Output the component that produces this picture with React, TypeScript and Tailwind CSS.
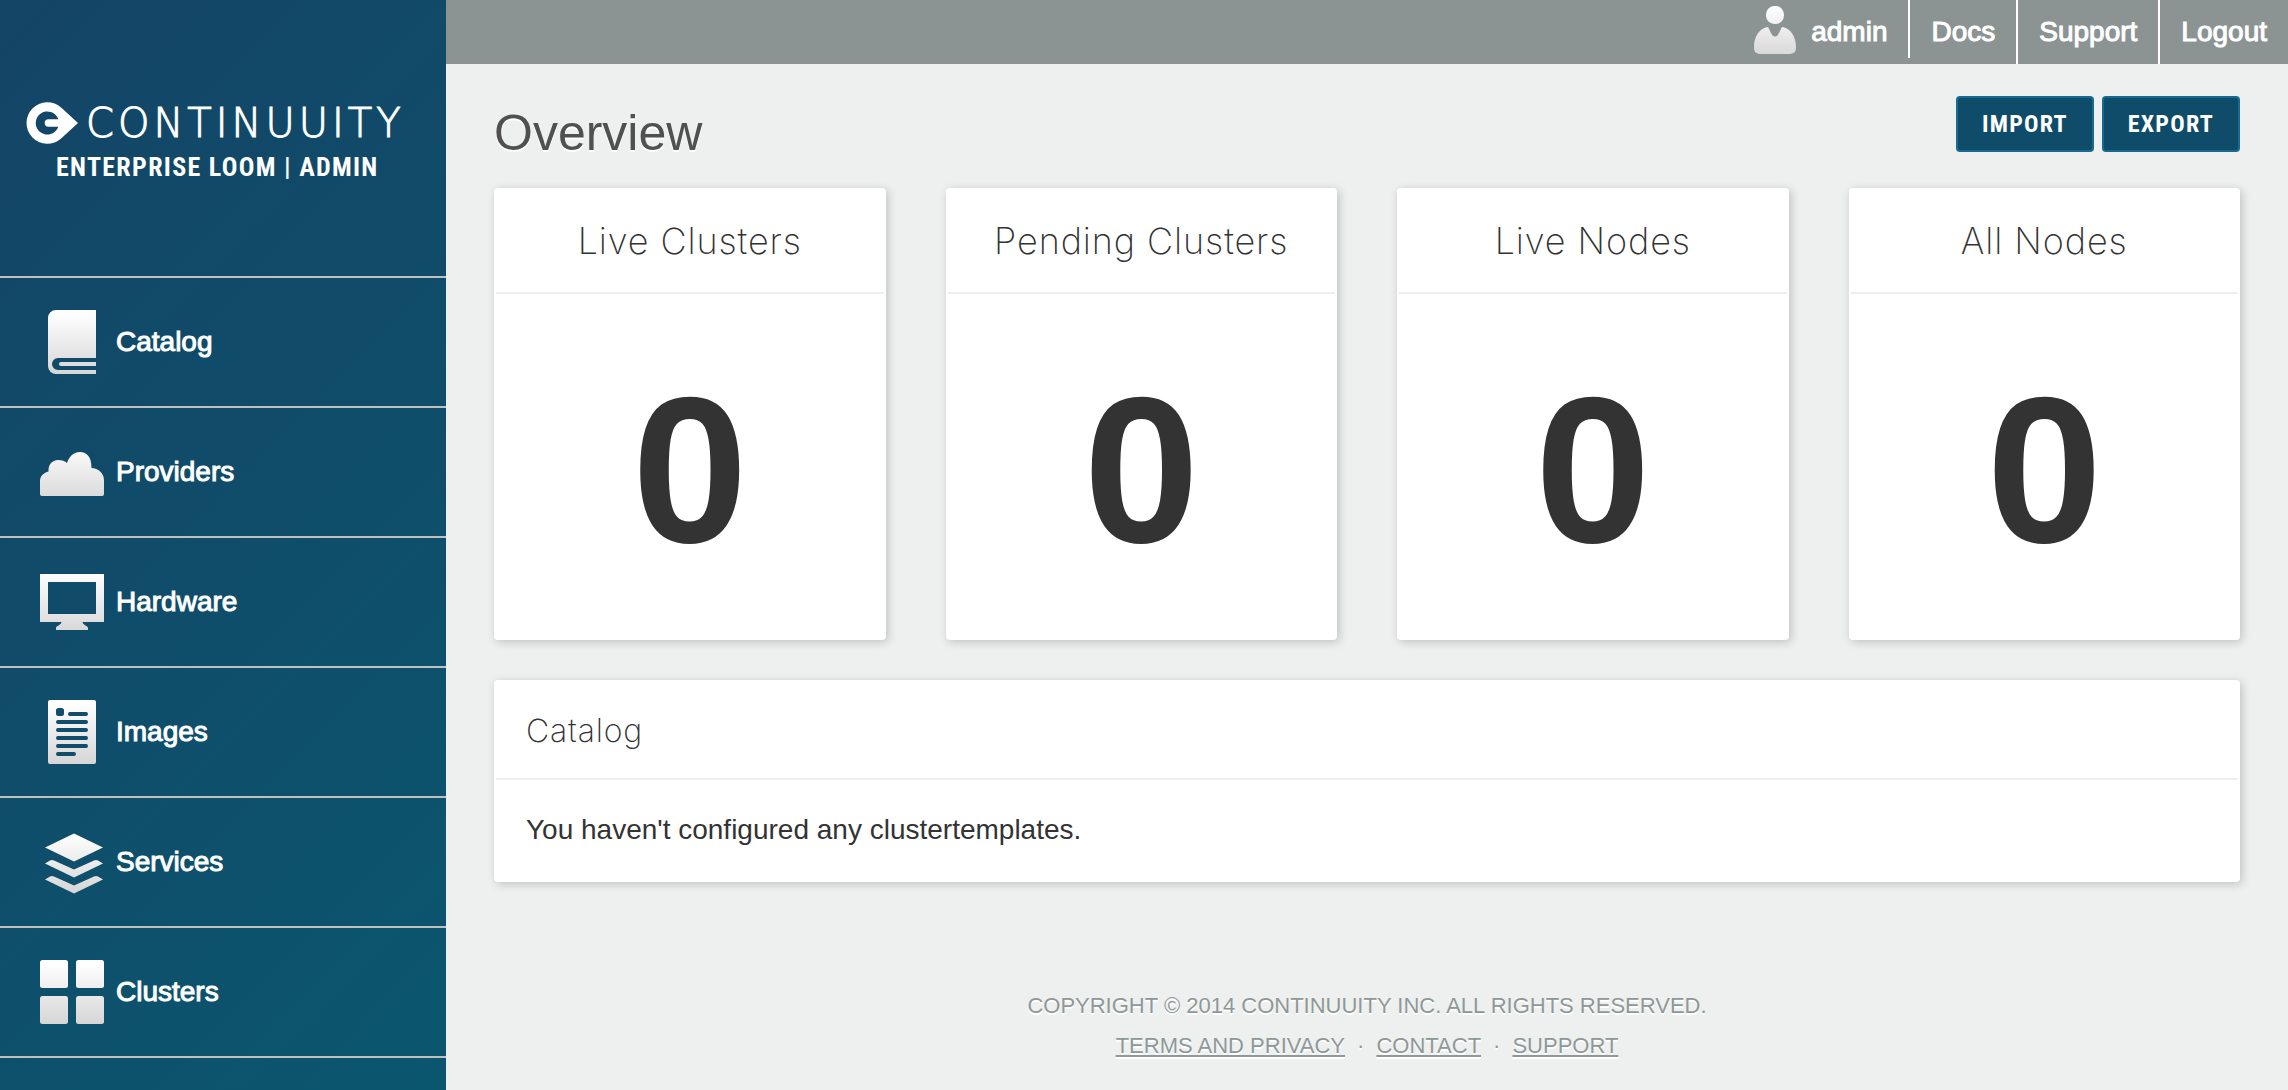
import type { ReactNode } from "react";

const stats = [
  { label: "Live Clusters", value: 0 },
  { label: "Pending Clusters", value: 0 },
  { label: "Live Nodes", value: 0 },
  { label: "All Nodes", value: 0 },
];

function Icon({ id, children }: { id: string; children: ReactNode }) {
  return (
    <svg viewBox="0 0 64 64" className="size-16 shrink-0" aria-hidden="true">
      <defs>
        <linearGradient id={id} gradientUnits="userSpaceOnUse" x1="0" y1="0" x2="0" y2="64">
          <stop offset="0.05" stopColor="#ffffff" />
          <stop offset="1" stopColor="#d6d6d6" />
        </linearGradient>
      </defs>
      <g fill={`url(#${id})`}>{children}</g>
    </svg>
  );
}

const navItems = [
  {
    label: "Catalog",
    icon: (
      <Icon id="catalog">
        <path d="M16 0H56V48H18a6 6 0 0 0 0 12H56V64H16a8 8 0 0 1-8-8V8a8 8 0 0 1 8-8Z" />
        <path d="M21 52H56V56H21a2 2 0 0 1 0-4Z" />
      </Icon>
    ),
  },
  {
    label: "Providers",
    icon: (
      <Icon id="providers">
        <path d="M2 56Q0 56 0 54V41C0 36 4 32.500 8.500 31.500C8 25 12 20 18 20C22 20 25 21 27 23C29 17 33 12 40 12C47 12 51.500 17 51.500 28C58 28 64 33 64 40V54Q64 56 62 56Z" />
      </Icon>
    ),
  },
  {
    label: "Hardware",
    icon: (
      <Icon id="hardware">
        <path
          fillRule="evenodd"
          d="M0 4H64V52H42.500C43 55.500 48 55.500 48 58V60H16V58C16 55.500 21 55.500 21.500 52H0ZM8 12V44H56V12Z"
        />
      </Icon>
    ),
  },
  {
    label: "Images",
    icon: (
      <Icon id="images">
        <path
          fillRule="evenodd"
          d="M10 0H54a2 2 0 0 1 2 2V62a2 2 0 0 1-2 2H10a2 2 0 0 1-2-2V2a2 2 0 0 1 2-2ZM18.500 8a2.500 2.500 0 0 0-2.500 2.500v3a2.500 2.500 0 0 0 2.500 2.500h3a2.500 2.500 0 0 0 2.500-2.500v-3a2.500 2.500 0 0 0-2.500-2.500ZM30 12a2 2 0 0 0 0 4H46a2 2 0 0 0 0-4ZM18 20a2 2 0 0 0 0 4H46a2 2 0 0 0 0-4ZM18 28a2 2 0 0 0 0 4H46a2 2 0 0 0 0-4ZM18 36a2 2 0 0 0 0 4H46a2 2 0 0 0 0-4ZM18 44a2 2 0 0 0 0 4H46a2 2 0 0 0 0-4ZM18 52a2 2 0 0 0 0 4H34a2 2 0 0 0 0-4Z"
        />
      </Icon>
    ),
  },
  {
    label: "Services",
    icon: (
      <Icon id="services">
        <path d="M34 3.500L63 17.500L34 31.500L5 17.500Z" />
        <path d="M5 33.500L10 30.500Q12 29.500 14 30.500L34 39.500L54 30.500Q56 29.500 58 30.500L63 33.500L34 47.500Z" />
        <path d="M5 49.500L10 46.500Q12 45.500 14 46.500L34 55.500L54 46.500Q56 45.500 58 46.500L63 49.500L34 63.500Z" />
      </Icon>
    ),
  },
  {
    label: "Clusters",
    icon: (
      <Icon id="clusters">
        <rect x="0" y="0" width="28" height="28" rx="2.500" />
        <rect x="36" y="0" width="28" height="28" rx="2.500" />
        <rect x="0" y="36" width="28" height="28" rx="2.500" />
        <rect x="36" y="36" width="28" height="28" rx="2.500" />
      </Icon>
    ),
  },
];

function UserIcon() {
  return (
    <svg viewBox="0 0 48 48" className="size-12 shrink-0" aria-hidden="true">
      <defs>
        <linearGradient id="user" gradientUnits="userSpaceOnUse" x1="0" y1="0" x2="0" y2="48">
          <stop offset="0" stopColor="#ffffff" />
          <stop offset="1" stopColor="#d9d9d9" />
        </linearGradient>
      </defs>
      <g fill="url(#user)">
        <rect x="15" y="0" width="18" height="18" rx="8.500" />
        <path d="M16 21C18 21 18 23 19.500 26C21 29 22 30.500 24 30.500S27 29 28.500 26C30 23 30 21 32 21C40 23 45 31 45 41C45 46 43 48 38 48H10C5 48 3 46 3 41C3 31 8 23 16 21Z" />
      </g>
    </svg>
  );
}

function Brand() {
  return (
    <a href="#home" className="flex h-[276px] flex-col items-start pt-[100px] pl-6 text-white">
      <span className="flex items-center gap-1.5">
        <svg viewBox="0 0 56 46" className="h-[46px] w-14 shrink-0" aria-hidden="true">
          <path
            fillRule="evenodd"
            fill="#ffffff"
            d="M54 23L37.400 38.300A20.800 20.800 0 1 1 37.400 7.700ZM34.300 19.300A11.600 11.600 0 1 0 34.300 26.700H24.400a3.700 3.700 0 0 1 0-7.400Z"
          />
        </svg>
        <span className="font-['DejaVu_Sans'] text-[40px] leading-[46px] font-extralight tracking-widest [-webkit-text-stroke:1px_white]">
          CONTINUUITY
        </span>
      </span>
      <span className="pl-8 font-['Roboto_Condensed','Roboto',sans-serif] text-[26px] leading-[42px] font-bold tracking-wider whitespace-nowrap">
        ENTERPRISE LOOM | ADMIN
      </span>
    </a>
  );
}

const panel = "rounded bg-white p-0.5 shadow-[2px_2px_10px_rgba(0,0,0,0.2)]";
const thin = "font-['Inter',sans-serif] font-extralight tracking-wide";
const button =
  "h-14 rounded border-2 border-[#176a94] bg-[#0f4c69] px-6 font-['Roboto_Condensed','Roboto',sans-serif] text-2xl leading-6 font-bold tracking-wider text-white";
const topLink = "flex items-center border-r-2 border-white px-[21px]";

export default function App() {
  return (
    <div className="flex min-h-screen bg-[#eef0ef] font-['Liberation_Sans',sans-serif] text-[28px] text-[#333333]">
      <aside className="w-[446px] shrink-0 bg-linear-[135deg,#144466_0%,#0b566f_100%]">
        <Brand />
        <nav className="border-b-2 border-[#c0c0c0]">
          {navItems.map((item) => (
            <a
              key={item.label}
              href={`#${item.label.toLowerCase()}`}
              className="flex h-[130px] items-center gap-3 border-t-2 border-[#c0c0c0] pl-10 text-white [-webkit-text-stroke:1px_white]"
            >
              {item.icon}
              {item.label}
            </a>
          ))}
        </nav>
      </aside>

      <div className="flex min-w-0 grow flex-col">
        <header className="flex h-16 justify-end bg-[#8b9393] text-white [-webkit-text-stroke:1px_white]">
          <a
            href="#profile"
            className="flex h-[58px] items-start gap-3 border-r-2 border-white pt-1.5 pr-[21px] leading-[52px]"
          >
            <UserIcon />
            admin
          </a>
          <a href="#docs" className={topLink}>Docs</a>
          <a href="#support" className={topLink}>Support</a>
          <a href="#logout" className="flex items-center px-[21px]">Logout</a>
        </header>

        <main className="px-12 pt-8">
          <div className="flex h-[92px] items-start justify-between">
            <h1 className="pt-[3px] text-[50px] leading-[68px] text-[#505050] [text-shadow:0_2px_0_white]">
              Overview
            </h1>
            <div className="flex gap-2">
              <button type="button" className={button}>IMPORT</button>
              <button type="button" className={button}>EXPORT</button>
            </div>
          </div>

          <section className="grid grid-cols-4 gap-[60px]">
            {stats.map((stat) => (
              <article key={stat.label} className={panel}>
                <h2 className={`flex h-[104px] items-center justify-center border-b-2 border-[#eeeeee] text-4xl ${thin}`}>
                  {stat.label}
                </h2>
                <p className="flex h-[344px] items-center justify-center pt-2 text-[208px] font-bold">
                  {stat.value}
                </p>
              </article>
            ))}
          </section>

          <section className={`mt-10 ${panel}`}>
            <h2 className={`flex h-[98px] items-center border-b-2 border-[#eeeeee] px-[30px] pt-0.5 text-[32px] ${thin}`}>
              Catalog
            </h2>
            <p className="flex h-[100px] items-center px-[30px]">
              You haven't configured any clustertemplates.
            </p>
          </section>
        </main>

        <footer className="mt-[104px] text-center text-[22px] leading-10 text-[#8f9898] [text-shadow:0_2px_0_white]">
          <p>COPYRIGHT © 2014 CONTINUUITY INC. ALL RIGHTS RESERVED.</p>
          <p className="flex justify-center gap-3">
            <a href="#terms" className="underline decoration-2 underline-offset-2">TERMS AND PRIVACY</a>
            <span>·</span>
            <a href="#contact" className="underline decoration-2 underline-offset-2">CONTACT</a>
            <span>·</span>
            <a href="#help" className="underline decoration-2 underline-offset-2">SUPPORT</a>
          </p>
        </footer>
      </div>
    </div>
  );
}
